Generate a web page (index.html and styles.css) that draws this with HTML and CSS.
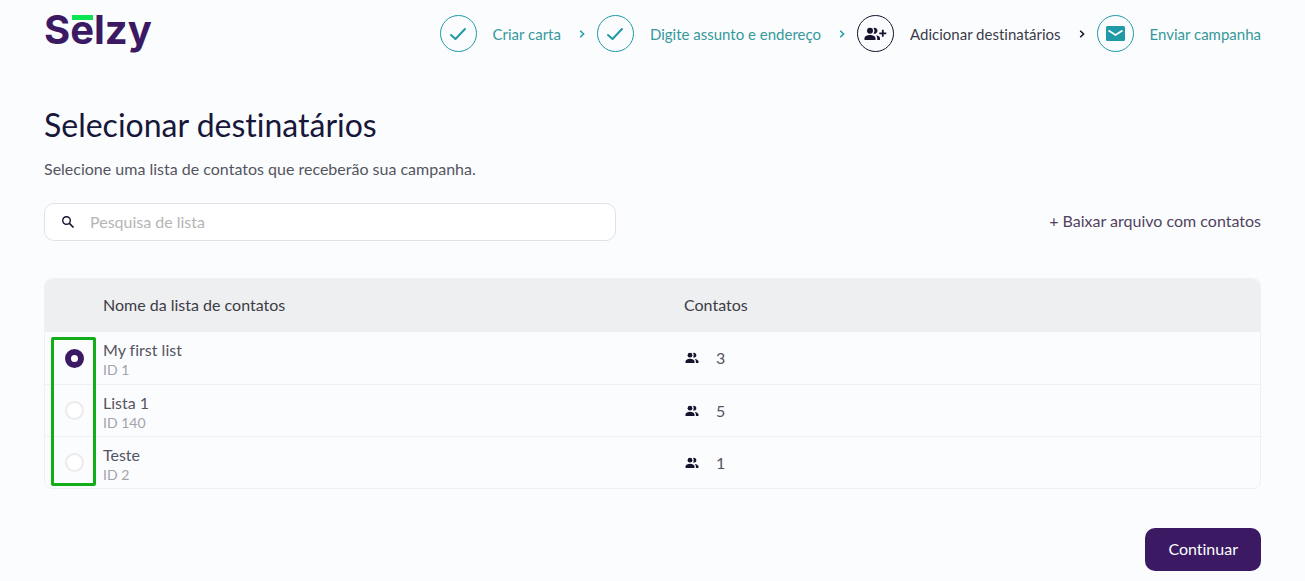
FILE: index.html
```html
<!DOCTYPE html>
<html lang="pt">
<head>
  <meta charset="UTF-8" />
  <title>Selecionar destinatários</title>
  <link rel="stylesheet" href="styles.css">
</head>
<body>
  <svg class="sprite" aria-hidden="true">
    <symbol id="check" viewBox="0 0 18 14">
      <path d="M2 8 L6.5 12 L16 2" fill="none" stroke="currentColor" stroke-width="2" stroke-linecap="round" stroke-linejoin="round" />
    </symbol>
    <symbol id="chevron" viewBox="0 0 6 8">
      <path d="M1.2 0.8 L4.6 4 L1.2 7.2" fill="none" stroke="currentColor" stroke-width="1.5" />
    </symbol>
    <symbol id="people" viewBox="0 0 14 12">
      <circle cx="5" cy="3.2" r="2.4" fill="currentColor" />
      <path d="M0.5 11 V9.6 C0.5 7.6 3 6.8 5 6.8 S9.5 7.6 9.5 9.6 V11 Z" fill="currentColor" />
      <path d="M8 1 A2.4 2.4 0 1 1 8 5.4 A4 4 0 0 0 8 1 Z" fill="currentColor" />
      <path d="M9.8 7 C12 7.3 13.5 8.2 13.5 9.6 V11 H10.9 V9.6 C10.9 8.5 10.5 7.7 9.8 7 Z" fill="currentColor" />
    </symbol>
  </svg>

  <header class="header">
    <a class="logo" href="#">S<span class="logo-bar">e</span>lzy</a>
    <nav class="steps">
      <a class="step" href="#">
        <span class="circle"><svg width="18" height="14"><use href="#check" /></svg></span>
        Criar carta
      </a>
      <svg class="chevron" width="6" height="8"><use href="#chevron" /></svg>
      <a class="step" href="#">
        <span class="circle"><svg width="18" height="14"><use href="#check" /></svg></span>
        Digite assunto e endereço
      </a>
      <svg class="chevron" width="6" height="8"><use href="#chevron" /></svg>
      <a class="step current" href="#" aria-current="step">
        <span class="circle">
          <svg width="23" height="14" viewBox="0 0 23 14">
            <circle cx="6" cy="3.8" r="3" fill="currentColor" />
            <path d="M0.5 13 V11.2 C0.5 8.9 3.6 8 6 8 S11.5 8.9 11.5 11.2 V13 Z" fill="currentColor" />
            <path d="M9.4 1 A3 3 0 1 1 9.4 6.6 A4.6 4.6 0 0 0 9.4 1 Z" fill="currentColor" />
            <path d="M12 8.3 C14.6 8.8 16 9.8 16 11.2 V13 H13.2 V11.2 C13.2 10 12.8 9.1 12 8.3 Z" fill="currentColor" />
            <path d="M18.8 2.8 V9.8 M15.3 6.3 H22.3" stroke="currentColor" stroke-width="1.8" />
          </svg>
        </span>
        Adicionar destinatários
      </a>
      <svg class="chevron dark" width="6" height="8"><use href="#chevron" /></svg>
      <a class="step" href="#">
        <span class="circle">
          <svg width="19" height="15" viewBox="0 0 19 15">
            <rect width="19" height="15" rx="1.5" fill="currentColor" />
            <path d="M2.5 4.5 L9.5 9 L16.5 4.5" fill="none" stroke="#fff" stroke-width="1.7" />
          </svg>
        </span>
        Enviar campanha
      </a>
    </nav>
  </header>

  <main>
    <h1>Selecionar destinatários</h1>
    <p class="intro">Selecione uma lista de contatos que receberão sua campanha.</p>

    <div class="toolbar">
      <label class="search">
        <svg width="14" height="14" viewBox="0 0 14 14" aria-hidden="true">
          <circle cx="5.5" cy="5.5" r="3.8" fill="none" stroke="currentColor" stroke-width="1.4" />
          <path d="M8.4 8.4 L12.5 12.5" stroke="currentColor" stroke-width="1.6" />
        </svg>
        <input type="text" placeholder="Pesquisa de lista" aria-label="Pesquisa de lista" />
      </label>
      <a class="upload" href="#">+ Baixar arquivo com contatos</a>
    </div>

    <form>
      <div class="lists">
        <table>
          <thead>
            <tr>
              <th class="pick"></th>
              <th class="name">Nome da lista de contatos</th>
              <th>Contatos</th>
            </tr>
          </thead>
          <tbody>
            <tr>
              <td class="pick"><input type="radio" name="list" id="list1" checked /></td>
              <td><label for="list1">My first list<small>ID 1</small></label></td>
              <td><span class="count"><svg width="14" height="12"><use href="#people" /></svg>3</span></td>
            </tr>
            <tr>
              <td class="pick"><input type="radio" name="list" id="list140" /></td>
              <td><label for="list140">Lista 1<small>ID 140</small></label></td>
              <td><span class="count"><svg width="14" height="12"><use href="#people" /></svg>5</span></td>
            </tr>
            <tr>
              <td class="pick"><input type="radio" name="list" id="list2" /></td>
              <td><label for="list2">Teste<small>ID 2</small></label></td>
              <td><span class="count"><svg width="14" height="12"><use href="#people" /></svg>1</span></td>
            </tr>
          </tbody>
        </table>
        <div class="highlight"></div>
      </div>
      <div class="actions">
        <button type="submit">Continuar</button>
      </div>
    </form>
  </main>
</body>
</html>
```
FILE: styles.css
```css
* { box-sizing: border-box; }
body {
  margin: 0; padding: 15px 44px 10px;
  background: #fbfcfe; color: #55555f;
  font: 16px/20px Lato, sans-serif;
  font-variant-ligatures: none;
}
a { color: inherit; text-decoration: none; }
svg { display: block; flex: none; }
.sprite { position: absolute; width: 0; height: 0; }

.header { display: flex; justify-content: space-between; align-items: flex-start; }
.logo { font: bold 40px/30px Inter, sans-serif; color: #3b1a63; }
.logo-bar { position: relative; }
.logo-bar::before {
  content: ""; position: absolute; top: 10px; left: 2px;
  width: 21px; height: 5px; background: #0be552;
}
.steps { display: flex; align-items: center; font-size: 15px; color: #35999b; }
.step { display: flex; align-items: center; gap: 16px; white-space: nowrap; }
.chevron { margin: 0 12px 0 18px; color: #1f9aa6; }
.circle {
  display: flex; align-items: center; justify-content: center;
  width: 37px; height: 37px; border: 1px solid currentColor; border-radius: 50%;
}
.step .circle { color: #1f9aa6; }
.current { color: #3c3c48; }
.step.current .circle, .dark { color: #17132f; }

h1 { margin: 53px 0 0; font-size: 32px; line-height: 40px; font-weight: normal; color: #17173a; }
.intro { margin: 14px 0 0; }

.toolbar { display: flex; justify-content: space-between; align-items: center; margin-top: 24px; }
.search {
  display: flex; align-items: center; gap: 15px;
  width: 47%; height: 38px; padding: 0 16px;
  background: #fff; border: 1px solid #e0e2e8; border-radius: 10px; color: #17132f;
}
.search input { flex: 1; height: 22px; border: 0; outline: 0; padding: 0 0 2px; background: none; font: inherit; }
.search input::placeholder { color: #b5b5b5; }
.upload { padding-bottom: 2px; color: #51435f; }

.lists { position: relative; margin-top: 37px; border: 1px solid #eff0f2; border-radius: 8px; }
table { width: 100%; border-spacing: 0; table-layout: fixed; }
th {
  height: 53px; padding: 0 0 2px; text-align: left; font-weight: normal;
  background: #eeeff1; color: #3c3c46;
}
th:first-child { border-top-left-radius: 8px; }
th:last-child { border-top-right-radius: 8px; }
td { height: 52px; padding: 0; }
tr + tr td { border-top: 1px solid #eff0f2; }
.pick { width: 58px; text-align: center; }
.name { width: 581px; }
td label, small { display: block; }
td label { padding-top: 4px; }
small { font-size: 14px; color: #a3a3ab; }
.count { display: flex; align-items: center; gap: 17px; padding-left: 1px; }
.count svg { color: #17132f; }
input[type=radio] {
  appearance: none; display: block; width: 19px; height: 19px; margin: 0 auto;
  background: #fff; border: 2px solid #ebebeb; border-radius: 50%;
}
input[type=radio]:checked { border: 6px solid #3b1a63; }
.highlight {
  position: absolute; top: 58px; left: 6px; width: 45px; height: 149px;
  border: 3px solid #13ad19; border-radius: 2px; pointer-events: none;
}

.actions { display: flex; justify-content: flex-end; margin-top: 39px; }
button {
  height: 43px; padding: 0 23px 2px; border: 0; border-radius: 10px;
  background: #3b1a63; color: #fff; font: inherit;
}
```
